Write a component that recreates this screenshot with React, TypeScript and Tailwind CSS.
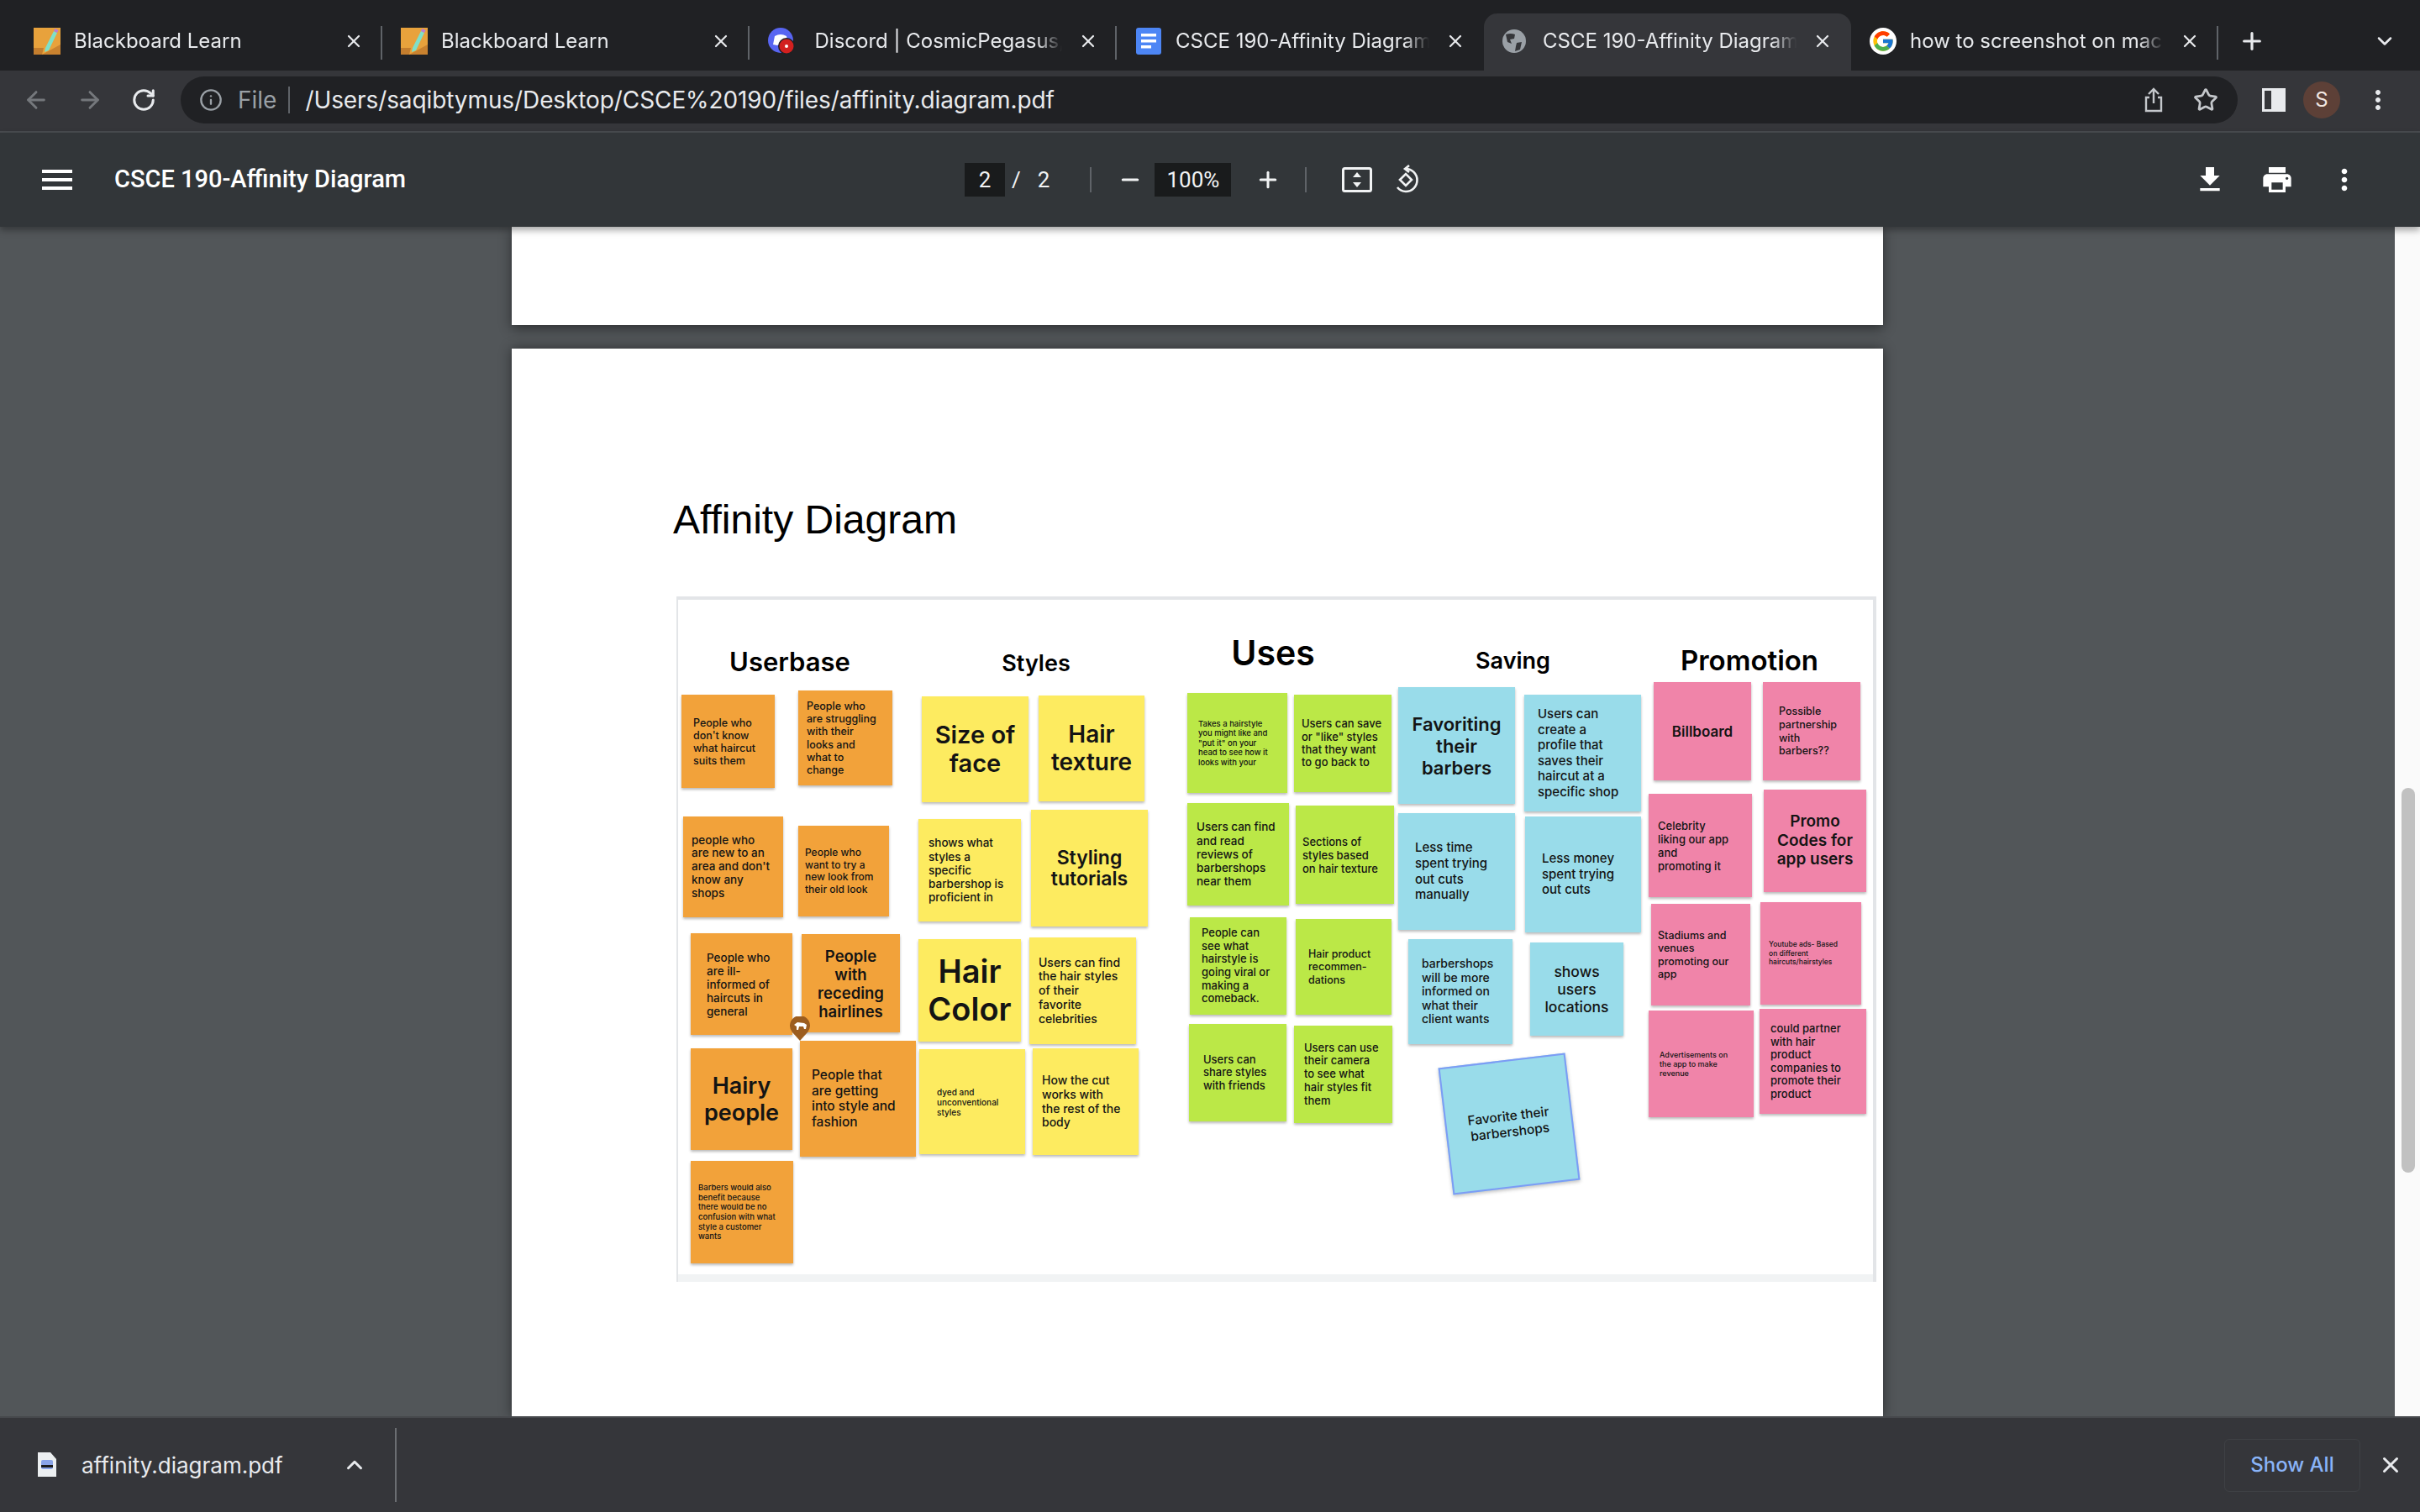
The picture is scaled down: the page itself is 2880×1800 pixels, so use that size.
import { ArrowLeft, ArrowRight, RotateCw, Info, Star, Plus, X, ChevronDown, ChevronUp, Minus } from "lucide-react";
import { FcGoogle } from "react-icons/fc";
import { MdMenu, MdFileDownload, MdPrint, MdMoreVert } from "react-icons/md";

const ui = "font-['Inter',sans-serif]";

const tabs = [
  { title: "Blackboard Learn", icon: "bb" },
  { title: "Blackboard Learn", icon: "bb" },
  { title: "Discord | CosmicPegasus, general", icon: "discord", dot: true },
  { title: "CSCE 190-Affinity Diagram - Google Docs", icon: "docs" },
  { title: "CSCE 190-Affinity Diagram", icon: "globe", active: true },
  { title: "how to screenshot on mac - Google Search", icon: "google" },
];

function Favicon({ kind }: { kind: string }) {
  if (kind === "bb") {
    return (
      <svg width="32" height="32" viewBox="0 0 32 32" className="shrink-0">
        <rect width="32" height="32" fill="#e8a23c" />
        <path d="M0 24 L12 24 L10 32 L0 32Z" fill="#c47e2e" />
        <path d="M10 32 L32 32 L32 20Z" fill="#c9822f" />
        <path d="M14 24 L24 4 L28 6 L18 27 L13 29Z" fill="#7fe0c8" />
        <path d="M24 4 L25.5 1 L29.5 3 L28 6Z" fill="#b77fd6" />
      </svg>
    );
  }
  if (kind === "discord") {
    return (
      <svg width="32" height="32" viewBox="0 0 32 32" className="shrink-0">
        <circle cx="15" cy="15" r="15" fill="#5865f2" />
        <path d="M8 10 Q15 6 22 10 L24 20 L19 21 L15 19 L11 21 L6 20Z" fill="#ffffff" />
        <circle cx="22" cy="22" r="10" fill="#202124" />
        <circle cx="22" cy="22" r="8.5" fill="#d2201f" />
        <circle cx="22" cy="22" r="2" fill="#ffffff" />
      </svg>
    );
  }
  if (kind === "docs") {
    return (
      <svg width="32" height="32" viewBox="0 0 32 32" className="shrink-0">
        <rect x="1" width="30" height="32" rx="3" fill="#4d86f5" />
        <rect x="7" y="7" width="18" height="3.5" fill="#ffffff" />
        <rect x="7" y="14" width="18" height="3.5" fill="#ffffff" />
        <rect x="7" y="21" width="12" height="3.5" fill="#ffffff" />
      </svg>
    );
  }
  if (kind === "globe") {
    return (
      <svg width="28" height="28" viewBox="0 0 28 28" className="shrink-0">
        <circle cx="14" cy="14" r="14" fill="#9aa0a6" />
        <path d="M4 6 Q10 4 15 6 L14 11 L9 12 L11 17 L6 15Z M17 16 L23 15 L21 24 L15 26 L16 20Z" fill="#35363a" />
      </svg>
    );
  }
  return (
    <span className="flex h-8 w-8 shrink-0 items-center justify-center rounded-full bg-white">
      <FcGoogle className="h-7 w-7" />
    </span>
  );
}

type Note = {
  x: number; y: number; w: number; h: number;
  color: string; size: number; lh: number; text: string;
  pad?: number; center?: boolean; bold?: boolean;
};

const O = "#f2a23a", Y = "#fdeb60", G = "#bbe847", B = "#99dcea", P = "#f084a9";

// x / y are page coordinates of the notes on the whiteboard
const notes: Note[] = [
  { x: 809, y: 827, w: 111, h: 111, color: O, size: 12.5, lh: 15, pad: 14, text: "People who\ndon't know\nwhat haircut\nsuits them" },
  { x: 948, y: 822, w: 112, h: 113, color: O, size: 12.5, lh: 15.2, pad: 10, text: "People who\nare struggling\nwith their\nlooks and\nwhat to\nchange" },
  { x: 811, y: 972, w: 119, h: 120, color: O, size: 13.5, lh: 15.8, pad: 10, text: "people who\nare new to an\narea and don't\nknow any\nshops" },
  { x: 948, y: 983, w: 108, h: 108, color: O, size: 12, lh: 14.5, pad: 8, text: "People who\nwant to try a\nnew look from\ntheir old look" },
  { x: 820, y: 1111, w: 121, h: 121, color: O, size: 13.5, lh: 16, pad: 19, text: "People who\nare ill-\ninformed of\nhaircuts in\ngeneral" },
  { x: 952, y: 1112, w: 117, h: 117, color: O, size: 18.5, lh: 22, center: true, bold: true, text: "People\nwith\nreceding\nhairlines" },
  { x: 820, y: 1248, w: 121, h: 121, color: O, size: 27, lh: 32, center: true, bold: true, text: "Hairy\npeople" },
  { x: 950, y: 1239, w: 138, h: 138, color: O, size: 15.5, lh: 18.5, pad: 14, text: "People that\nare getting\ninto style and\nfashion" },
  { x: 820, y: 1382, w: 122, h: 122, color: O, size: 9.5, lh: 11.7, pad: 9, text: "Barbers would also\nbenefit because\nthere would be no\nconfusion with what\nstyle a customer\nwants" },
  { x: 1095, y: 829, w: 127, h: 126, color: Y, size: 29, lh: 34, center: true, bold: true, text: "Size of\nface" },
  { x: 1234, y: 828, w: 126, h: 126, color: Y, size: 28, lh: 33, center: true, bold: true, text: "Hair\ntexture" },
  { x: 1091, y: 975, w: 122, h: 122, color: Y, size: 13.5, lh: 16.2, pad: 12, text: "shows what\nstyles a\nspecific\nbarbershop is\nproficient in" },
  { x: 1225, y: 964, w: 139, h: 139, color: Y, size: 23, lh: 25, center: true, bold: true, text: "Styling\ntutorials" },
  { x: 1091, y: 1118, w: 122, h: 122, color: Y, size: 38, lh: 45, center: true, bold: true, text: "Hair\nColor" },
  { x: 1223, y: 1116, w: 127, h: 127, color: Y, size: 14, lh: 16.7, pad: 11, text: "Users can find\nthe hair styles\nof their\nfavorite\ncelebrities" },
  { x: 1092, y: 1249, w: 126, h: 125, color: Y, size: 10, lh: 12, pad: 21, text: "dyed and\nunconventional\nstyles" },
  { x: 1227, y: 1248, w: 126, h: 127, color: Y, size: 14, lh: 16.7, pad: 11, text: "How the cut\nworks with\nthe rest of the\nbody" },
  { x: 1411, y: 825, w: 119, h: 119, color: G, size: 9.5, lh: 11.6, pad: 13, text: "Takes a hairstyle\nyou might like and\n\"put it\" on your\nhead to see how it\nlooks with your" },
  { x: 1538, y: 827, w: 116, h: 116, color: G, size: 13, lh: 15.3, pad: 9, text: "Users can save\nor \"like\" styles\nthat they want\nto go back to" },
  { x: 1411, y: 956, w: 121, h: 122, color: G, size: 13.5, lh: 16.2, pad: 11, text: "Users can find\nand read\nreviews of\nbarbershops\nnear them" },
  { x: 1540, y: 959, w: 117, h: 117, color: G, size: 13, lh: 16, pad: 8, text: "Sections of\nstyles based\non hair texture" },
  { x: 1414, y: 1092, w: 115, h: 116, color: G, size: 13, lh: 15.7, pad: 14, text: "People can\nsee what\nhairstyle is\ngoing viral or\nmaking a\ncomeback." },
  { x: 1540, y: 1094, w: 114, h: 114, color: G, size: 12.5, lh: 15.5, pad: 15, text: "Hair product\nrecommen-\ndations" },
  { x: 1413, y: 1219, w: 116, h: 116, color: G, size: 13, lh: 15.3, pad: 17, text: "Users can\nshare styles\nwith friends" },
  { x: 1538, y: 1221, w: 117, h: 116, color: G, size: 13, lh: 15.7, pad: 12, text: "Users can use\ntheir camera\nto see what\nhair styles fit\nthem" },
  { x: 1662, y: 818, w: 139, h: 139, color: B, size: 22, lh: 26, center: true, bold: true, text: "Favoriting\ntheir\nbarbers" },
  { x: 1812, y: 827, w: 139, h: 139, color: B, size: 15, lh: 18.5, pad: 16, text: "Users can\ncreate a\nprofile that\nsaves their\nhaircut at a\nspecific shop" },
  { x: 1662, y: 968, w: 139, h: 139, color: B, size: 15, lh: 18.7, pad: 20, text: "Less time\nspent trying\nout cuts\nmanually" },
  { x: 1813, y: 972, w: 138, h: 138, color: B, size: 15, lh: 18.5, pad: 20, text: "Less money\nspent trying\nout cuts" },
  { x: 1674, y: 1118, w: 124, h: 125, color: B, size: 14, lh: 16.5, pad: 16, text: "barbershops\nwill be more\ninformed on\nwhat their\nclient wants" },
  { x: 1819, y: 1122, w: 111, h: 111, color: B, size: 17.5, lh: 21, center: true, text: "shows\nusers\nlocations" },
  { x: 1966, y: 812, w: 116, h: 117, color: P, size: 17, lh: 22, center: true, bold: true, text: "Billboard" },
  { x: 2096, y: 812, w: 116, h: 117, color: P, size: 12.5, lh: 15.7, pad: 19, text: "Possible\npartnership\nwith\nbarbers??" },
  { x: 1960, y: 945, w: 123, h: 123, color: P, size: 13, lh: 16, pad: 11, text: "Celebrity\nliking our app\nand\npromoting it" },
  { x: 2097, y: 940, w: 122, h: 122, color: P, size: 19, lh: 22.5, center: true, bold: true, text: "Promo\nCodes for\napp users" },
  { x: 1963, y: 1076, w: 118, h: 121, color: P, size: 12.5, lh: 15.5, pad: 8, text: "Stadiums and\nvenues\npromoting our\napp" },
  { x: 2093, y: 1074, w: 120, h: 122, color: P, size: 8.5, lh: 10.5, pad: 10, text: "Youtube ads- Based\non different\nhaircuts/hairstyles" },
  { x: 1960, y: 1203, w: 125, h: 127, color: P, size: 9, lh: 11, pad: 13, text: "Advertisements on\nthe app to make\nrevenue" },
  { x: 2092, y: 1201, w: 127, h: 125, color: P, size: 13, lh: 15.5, pad: 13, text: "could partner\nwith hair\nproduct\ncompanies to\npromote their\nproduct" },
];

const headings = [
  { x: 857, y: 766, w: 162, size: 31, text: "Userbase" },
  { x: 1184, y: 768, w: 94, size: 27, text: "Styles" },
  { x: 1462, y: 755, w: 102, size: 41, text: "Uses" },
  { x: 1746, y: 765, w: 105, size: 27, text: "Saving" },
  { x: 1983, y: 764, w: 194, size: 33, text: "Promotion" },
];

const FRAME_X = 805;
const FRAME_Y = 714;

function Sticky({ n }: { n: Note }) {
  return (
    <div
      className={`absolute flex items-center shadow-[0_2px_3px_rgba(0,0,0,0.28)] text-[#141414] ${n.center ? "justify-center text-center" : ""} ${n.bold ? "font-semibold" : "font-medium"}`}
      style={{
        left: n.x - FRAME_X,
        top: n.y - FRAME_Y,
        width: n.w,
        height: n.h,
        background: n.color,
        fontSize: n.size,
        lineHeight: `${n.lh}px`,
        paddingLeft: n.pad,
      }}
    >
      <span className="whitespace-pre">{n.text}</span>
    </div>
  );
}

function Whiteboard() {
  return (
    <div className={`relative ml-[196px] mt-[63px] h-[816px] w-[1428px] border-t-4 border-r-4 border-l-2 border-[#e3e5e8] bg-white ${ui}`}>
      {headings.map((h) => (
        <div
          key={h.text}
          className="absolute whitespace-nowrap text-center font-semibold leading-[44px] text-black"
          style={{ left: h.x - FRAME_X, top: h.y - FRAME_Y, width: h.w, fontSize: h.size }}
        >
          {h.text}
        </div>
      ))}
      {notes.map((n) => (
        <Sticky key={n.text} n={n} />
      ))}
      <div className="absolute left-[913px] top-[548px] flex h-[152px] w-[152px] rotate-[-6.8deg] items-center justify-center border-2 border-[#7c9cf5] bg-[#99dcea] text-center text-[15.5px] font-medium leading-[19px] text-[#141414] shadow-[0_2px_4px_rgba(0,0,0,0.25)]">
        Favorite their<br />barbershops
      </div>
      <svg width="24" height="30" viewBox="0 0 24 30" className="absolute left-[133px] top-[496px]">
        <path d="M12 29 L3 19 A12 12 0 1 1 21 19Z" fill="#9c5d1f" />
        <path d="M5 10 L9 7 L17 8 L20 10 L19 15 L17 15 L16 12 L11 12 L10 16 L8 16 L8 12Z" fill="#ffffff" />
      </svg>
      <div className="absolute bottom-0 left-0 right-0 h-[9px] bg-[#f1f3f4]" />
    </div>
  );
}

export default function App() {
  return (
    <div className={`flex h-[1800px] w-[2880px] flex-col overflow-hidden bg-[#525659] ${ui}`}>
      {/* tab strip */}
      <div className="flex h-[84px] items-end bg-[#202124] pl-[18px]">
        {tabs.map((t, i) => (
          <div
            key={i}
            className={`relative flex h-[68px] w-[437px] items-center pb-[2px] pl-[22px] text-[24px] text-[#e8eaed] ${t.active ? "rounded-t-[16px] bg-[#35363a]" : ""}`}
          >
            <span className="flex w-[48px] shrink-0 items-center"><Favicon kind={t.icon} /></span>
            <span className="w-[302px] overflow-hidden whitespace-nowrap [mask-image:linear-gradient(to_right,black_90%,transparent)]">
              {t.dot ? <span className="mr-[8px] ml-[-14px]">•</span> : null}
              {t.title}
            </span>
            <X className="ml-[19px] h-[24px] w-[24px] shrink-0 text-[#e8eaed]" strokeWidth={2.2} />
            {!t.active && i !== 3 ? <span className="absolute right-0 top-[15px] h-[40px] w-[2px] bg-[#5f6368]" /> : null}
          </div>
        ))}
        <div className="flex h-[68px] items-center pb-[2px]">
          <Plus className="ml-[24px] h-[32px] w-[32px] text-[#e8eaed]" strokeWidth={2.4} />
          <ChevronDown className="ml-[128px] h-[28px] w-[28px] text-[#e8eaed]" strokeWidth={2.2} />
        </div>
      </div>

      {/* omnibox row */}
      <div className="flex h-[74px] items-center border-b-2 border-[#494c50] bg-[#35363a] pb-[2px]">
        <ArrowLeft className="ml-[27px] h-[32px] w-[32px] text-[#75787c]" strokeWidth={2.2} />
        <ArrowRight className="ml-[32px] h-[32px] w-[32px] text-[#75787c]" strokeWidth={2.2} />
        <RotateCw className="ml-[33px] h-[30px] w-[30px] text-[#e8eaed]" strokeWidth={2.4} />
        <div className="ml-[29px] flex h-[56px] w-[2448px] items-center rounded-full bg-[#202124]">
          <Info className="ml-[22px] h-[28px] w-[28px] text-[#9aa0a6]" strokeWidth={2} />
          <span className="ml-[18px] text-[28px] text-[#9aa0a6]">File</span>
          <span className="ml-[14px] h-[32px] w-[2px] bg-[#5f6368]" />
          <span className="ml-[18px] text-[28px] tracking-[-0.1px] text-[#e8eaed]">/Users/saqibtymus/Desktop/CSCE%20190/files/affinity.diagram.pdf</span>
          <svg width="28" height="32" viewBox="0 0 28 32" className="ml-auto text-[#c4c7cb]" fill="none" stroke="currentColor" strokeWidth="2.4">
            <path d="M14 20 V3 M8 9 L14 3 L20 9" />
            <path d="M9 13 H5 V29 H23 V13 H19" />
          </svg>
          <Star className="ml-[33px] mr-[23px] h-[30px] w-[30px] text-[#c4c7cb]" strokeWidth={2.2} />
        </div>
        <span className="ml-[29px] flex h-[28px] w-[28px] justify-end border-[3px] border-[#e8eaed] bg-[#35363a]">
          <span className="h-full w-[14px] bg-[#e8eaed]" />
        </span>
        <span className="ml-[21px] flex h-[44px] w-[44px] items-center justify-center rounded-full bg-[#5d4037] text-[24px] text-[#f1e6e1]">S</span>
        <MdMoreVert className="ml-[27px] h-[36px] w-[36px] text-[#e8eaed]" />
      </div>

      {/* pdf viewer toolbar */}
      <div className="z-10 flex h-[112px] items-center bg-[#323639] text-[#f1f3f4] shadow-[0_4px_8px_rgba(0,0,0,0.35)]">
        <div className="flex w-[1148px] items-center">
          <MdMenu className="ml-[44px] h-[48px] w-[48px] text-white" />
          <span className="ml-[44px] font-['Roboto',sans-serif] text-[29px] font-medium text-white">CSCE 190-Affinity Diagram</span>
        </div>
        <span className="flex h-[40px] w-[48px] items-center justify-center bg-[#191b1c] font-['Roboto',sans-serif] text-[26px]">2</span>
        <span className="ml-[8px] font-['Roboto',sans-serif] text-[26px]">/</span>
        <span className="ml-[20px] font-['Roboto',sans-serif] text-[26px]">2</span>
        <span className="ml-[48px] h-[30px] w-[2px] bg-[#5f6368]" />
        <Minus className="ml-[31px] h-[30px] w-[30px]" strokeWidth={2.4} />
        <span className="ml-[14px] flex h-[40px] w-[91px] items-center justify-center bg-[#191b1c] font-['Roboto',sans-serif] text-[26px]">100%</span>
        <Plus className="ml-[29px] h-[30px] w-[30px]" strokeWidth={2.4} />
        <span className="ml-[29px] h-[30px] w-[2px] bg-[#5f6368]" />
        <svg width="36" height="30" viewBox="0 0 36 30" className="ml-[42px]" fill="none">
          <rect x="1.5" y="1.5" width="33" height="27" rx="2" stroke="#f1f3f4" strokeWidth="3" />
          <path d="M18 6 L23 12 H13Z M18 24 L23 18 H13Z" fill="#f1f3f4" />
        </svg>
        <svg width="36" height="36" viewBox="0 0 36 36" className="ml-[21px]" fill="none" stroke="#f1f3f4" strokeWidth="2.6">
          <path d="M12 18 L19 11 L26 18 L19 25Z" />
          <path d="M19 5 A13 13 0 0 1 19 32 A13 13 0 0 1 9 27" />
          <path d="M23 1 L18 5 L23 9" />
        </svg>
        <MdFileDownload className="ml-[920px] h-[40px] w-[40px] text-white" />
        <MdPrint className="ml-[40px] h-[40px] w-[40px] text-white" />
        <MdMoreVert className="ml-[40px] h-[40px] w-[40px] text-white" />
      </div>

      {/* document area */}
      <div className="flex min-h-0 flex-1">
        <div className="flex min-w-0 flex-1 flex-col pl-[609px]">
          <div className="h-[117px] w-[1632px] bg-white shadow-[0_4px_14px_rgba(0,0,0,0.45)]" />
          <div className="mt-[28px] min-h-0 flex-1 w-[1632px] bg-white pt-[176px] shadow-[0_0_14px_rgba(0,0,0,0.45)]">
            <h1 className="ml-[192px] font-['Liberation_Sans',sans-serif] text-[48px] leading-[56px] text-black">Affinity Diagram</h1>
            <Whiteboard />
          </div>
        </div>
        <div className="w-[30px] shrink-0 bg-[#fafafa] pl-[8px] pt-[668px]">
          <div className="h-[458px] w-[16px] rounded-full bg-[#c1c1c1]" />
        </div>
      </div>

      {/* download shelf */}
      <div className="z-10 flex h-[114px] items-center border-t-2 border-[#46484c] bg-[#35363a] text-[#e8eaed]">
        <svg width="24" height="30" viewBox="0 0 24 30" className="ml-[44px]">
          <path d="M1 0 H16 L23 8 V29 H1Z" fill="#eceff1" />
          <rect x="5" y="9" width="14" height="11" rx="2" fill="#8aa4e8" />
          <rect x="5" y="15" width="14" height="3" fill="#1c1c1c" />
        </svg>
        <span className="ml-[29px] text-[26px]">affinity.diagram.pdf</span>
        <ChevronUp className="ml-[70px] h-[30px] w-[30px]" strokeWidth={2.4} />
        <span className="ml-[33px] h-[88px] w-[2px] bg-[#6b6e72]" />
        <button className="ml-auto h-[63px] w-[162px] rounded-[6px] border border-[#3f4145] text-[24px] font-medium text-[#8ab4f8]">Show All</button>
        <X className="ml-[21px] mr-[20px] h-[30px] w-[30px]" strokeWidth={2.4} />
      </div>
    </div>
  );
}
